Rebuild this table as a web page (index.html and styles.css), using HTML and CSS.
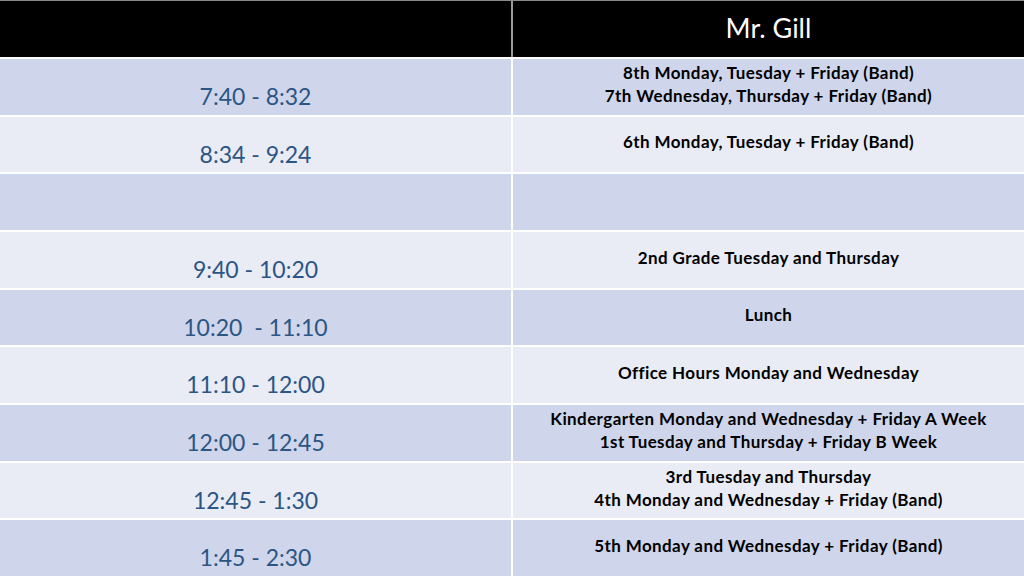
FILE: index.html
```html
<!DOCTYPE html>
<html>
<head>
<meta charset="utf-8">
<link rel="stylesheet" href="styles.css">
</head>
<body>
<div class="sheet">
  <div class="head">
    <div class="head-cell"></div>
    <div class="head-sep"></div>
    <div class="head-cell title">Mr. Gill</div>
  </div>

  <div class="time dark">7:40 - 8:32</div>
  <div class="info dark"><span>8th Monday, Tuesday + Friday (Band)</span><span>7th Wednesday, Thursday + Friday (Band)</span></div>

  <div class="time light">8:34 - 9:24</div>
  <div class="info light"><span>6th Monday, Tuesday + Friday (Band)</span></div>

  <div class="time dark"></div>
  <div class="info dark"></div>

  <div class="time light">9:40 - 10:20</div>
  <div class="info light"><span>2nd Grade Tuesday and Thursday</span></div>

  <div class="time dark">10:20&nbsp; - 11:10</div>
  <div class="info dark"><span>Lunch</span></div>

  <div class="time light">11:10 - 12:00</div>
  <div class="info light"><span>Office Hours Monday and Wednesday</span></div>

  <div class="time dark">12:00 - 12:45</div>
  <div class="info dark"><span>Kindergarten Monday and Wednesday + Friday A Week</span><span>1st Tuesday and Thursday + Friday B Week</span></div>

  <div class="time light">12:45 - 1:30</div>
  <div class="info light"><span>3rd Tuesday and Thursday</span><span>4th Monday and Wednesday + Friday (Band)</span></div>

  <div class="time dark">1:45 - 2:30</div>
  <div class="info dark"><span>5th Monday and Wednesday + Friday (Band)</span></div>
</div>
</body>
</html>
```

FILE: styles.css
```css
html, body {
  margin: 0;
  padding: 0;
  background: #ffffff;
}

.sheet {
  width: 1024px;
  height: 576px;
  display: grid;
  grid-template-columns: 511px 511px;
  grid-template-rows: 57px repeat(9, 1fr);
  column-gap: 2px;
  row-gap: 2px;
  background: #ffffff;
  font-family: Lato, "Open Sans", sans-serif;
}

.head {
  grid-column: 1 / 3;
  display: flex;
  background: #000000;
  border-top: 1px solid #8a8a8a;
  box-sizing: border-box;
}

.head-cell {
  flex: 1;
  display: flex;
  align-items: center;
  justify-content: center;
  color: #ffffff;
}

.head-sep {
  width: 2px;
  background: #9a9a9a;
}

.title {
  font-size: 27px;
  padding-bottom: 4px;
}

.dark { background: #cfd5ea; }
.light { background: #e9ebf5; }

.time {
  display: flex;
  justify-content: center;
  align-items: flex-start;
  padding-top: 23px;
  box-sizing: border-box;
  color: #2b5584;
  font-size: 23px;
  line-height: 28px;
}

.info {
  display: flex;
  flex-direction: column;
  justify-content: center;
  align-items: center;
  padding-bottom: 5px;
  box-sizing: border-box;
  color: #000000;
  font-size: 17px;
  font-weight: bold;
  line-height: 23px;
  letter-spacing: 0.4px;
}
```
